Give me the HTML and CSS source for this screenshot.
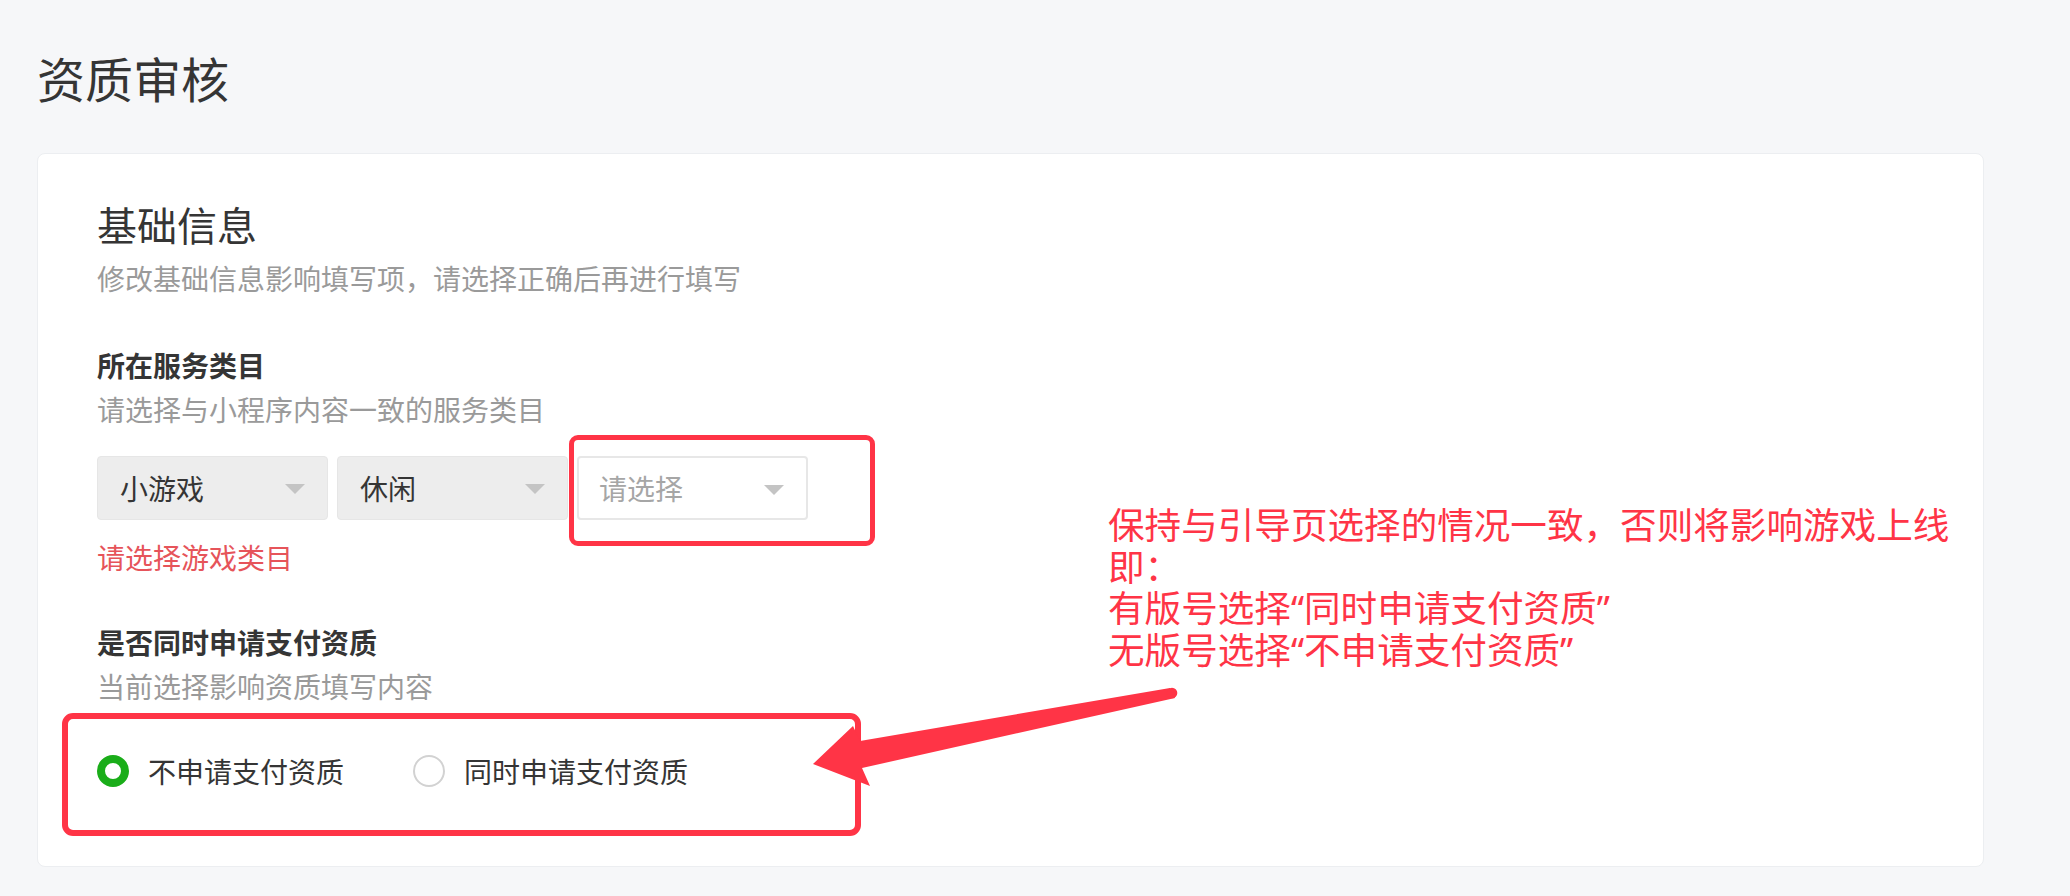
FILE: index.html
```
<html lang="zh-CN"><head>
    <meta charset="UTF-8">
    <meta name="viewport" content="width=device-width, initial-scale=1.0">
    <title>资质审核</title>
    <link rel="stylesheet" href="styles.css">
</head>
<body>
<div class="page">
    <h1 class="title">资质审核</h1>

    <div class="card">
        <h2>基础信息</h2>
        <p class="tips">修改基础信息影响填写项，请选择正确后再进行填写</p>

        <div class="field">
            <h3>所在服务类目</h3>
            <p class="tips">请选择与小程序内容一致的服务类目</p>
            <div class="selects">
                <div class="select">小游戏</div>
                <div class="select">休闲</div>
                <div class="select empty">请选择</div>
            </div>
            <p class="error">请选择游戏类目</p>
        </div>

        <div class="field pay">
            <h3>是否同时申请支付资质</h3>
            <p class="tips">当前选择影响资质填写内容</p>
            <div class="radios">
                <label class="radio checked"><span class="dot"></span>不申请支付资质</label>
                <label class="radio"><span class="dot"></span>同时申请支付资质</label>
            </div>
        </div>
    </div>
</div>

<!-- annotations drawn over the screenshot -->
<div class="mark mark-select"></div>
<div class="mark mark-radio"></div>
<svg class="arrow" width="390" height="120" viewBox="800 680 390 120">
    <path d="M1170 688 L860 741 L853 726 L813 764 L870 786 L862 768 L1175 698 Z" fill="#ff3446"/>
    <circle cx="1172" cy="693" r="5.3" fill="#ff3446"/>
</svg>
<div class="note">
    <div>保持与引导页选择的情况一致，否则将影响游戏上线</div>
    <div>即：</div>
    <div>有版号选择“同时申请支付资质”</div>
    <div>无版号选择“不申请支付资质”</div>
</div>
</body>
</html>
```

FILE: styles.css
```
body {
    margin: 0;
    padding: 0;
    position: relative;
    font-family: "Noto Sans CJK SC", "Noto Sans", sans-serif;
    background-color: #f6f7f9;
    color: #353535;
}

h1, h2, h3, p {
    font-weight: 400;
    margin: 0;
}

.page {
    padding: 45px 86px 0 37px;
}

.title {
    font-size: 48px;
    line-height: 64px;
    margin-bottom: 44px;
}

.card {
    background: #fff;
    border: 1px solid #eceef1;
    border-radius: 8px;
    padding: 42px 60px 63px 59px;
}

.card h2 {
    font-size: 40px;
    line-height: 56px;
    margin-bottom: 4px;
}

.tips {
    font-size: 28px;
    line-height: 44px;
    color: #9a9a9a;
}

.field {
    margin-top: 43px;
}

.field h3 {
    font-size: 28px;
    line-height: 44px;
    font-weight: 700;
}

.field.pay {
    margin-top: 41px;
}

.selects {
    display: flex;
    gap: 9px;
    margin-top: 25px;
}

.select {
    position: relative;
    box-sizing: border-box;
    width: 231px;
    height: 64px;
    padding: 0 22px;
    font-size: 28px;
    line-height: 62px;
    background: #ededed;
    border: 1px solid #e6e6e6;
    border-radius: 4px;
}

.select::after {
    content: "";
    position: absolute;
    right: 22px;
    top: 27px;
    border-left: 10px solid transparent;
    border-right: 10px solid transparent;
    border-top: 10px solid #c4c4c4;
}

.select.empty {
    background: #fff;
    border: 2px solid #e7e7e7;
    color: #a6a6a6;
    line-height: 60px;
    padding-left: 20px;
}

.error {
    margin-top: 15px;
    font-size: 28px;
    line-height: 44px;
    color: #e6545a;
}

.radios {
    display: flex;
    align-items: center;
    height: 64px;
    margin-top: 31px;
}

.radio {
    display: flex;
    align-items: center;
    gap: 19px;
    font-size: 28px;
    line-height: 44px;
    margin-right: 69px;
}

.radio .dot {
    box-sizing: border-box;
    width: 32px;
    height: 32px;
    border-radius: 50%;
    border: 2px solid #d2d2d2;
    background: #fff;
}

.radio.checked .dot {
    border: 8px solid #1aad19;
}

.mark {
    position: absolute;
    box-sizing: border-box;
    border: 5px solid #ff3446;
    border-radius: 9px;
}

.mark-select {
    left: 569px;
    top: 435px;
    width: 306px;
    height: 111px;
}

.mark-radio {
    left: 62px;
    top: 713px;
    width: 799px;
    height: 123px;
    border-width: 6px;
    border-radius: 11px;
}

.arrow {
    position: absolute;
    left: 800px;
    top: 680px;
}

/* latin font first so the curly quotes stay narrow */
.note {
    position: absolute;
    left: 1108px;
    top: 505px;
    font-family: "Noto Sans", "Noto Sans CJK SC", sans-serif;
    font-size: 36.6px;
    color: #ff3446;
    white-space: nowrap;
}

.note div {
    height: 41.5px;
    line-height: 41.5px;
}
```
